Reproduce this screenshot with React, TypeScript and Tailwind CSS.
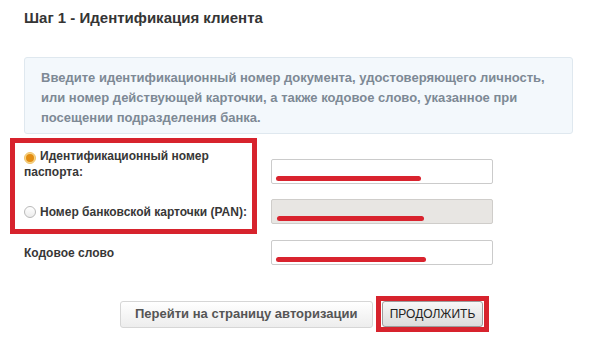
import React from 'react';

const RedScribble = ({ left, width }: { left: number; width: number }) => (
    <span
        className="absolute top-[16px] h-[5px] rounded-full bg-[#d9232e]"
        style={{ left, width }}
    />
);

const Radio = ({ checked }: { checked?: boolean }) =>
    checked ? (
        <span className="inline-flex w-[12px] h-[12px] rounded-full border border-[#f2c46a] bg-[#f7d68c] items-center justify-center mr-[4px] align-[-2px]">
            <span className="w-[8px] h-[8px] rounded-full bg-[#e38d12]" />
        </span>
    ) : (
        <span className="inline-block w-[12px] h-[12px] rounded-full border border-[#b9b9b9] bg-gradient-to-b from-white to-[#ececec] mr-[4px] align-[-2px]" />
    );

const App: React.FC = () => {
    return (
        <div className="w-[600px] h-[355px] overflow-hidden bg-white pl-6 pt-2 font-['Liberation_Sans',Arial,sans-serif]">
            <h1 className="text-[15px] font-bold leading-5 text-[#353535]">Шаг 1 - Идентификация клиента</h1>

            <div className="mt-[29px] w-[549px] rounded-[3px] border border-[#dfe8ef] bg-[#f3f8fc] pl-4 pr-4 pt-[10px] pb-[5px] text-[13px] font-bold leading-5 text-[#7d8995]">
                Введите идентификационный номер документа, удостоверяющего личность,
                <br />
                или номер действующей карточки, а также кодовое слово, указанное при
                <br />
                посещении подразделения банка.
            </div>

            {/* form */}
            <div className="relative mt-[14px] text-[12px] font-bold text-[#373737]">
                {/* annotation frame */}
                <div className="absolute -left-[14px] -top-[10px] w-[247px] h-[96px] border-[5px] border-[#d7232d]" />

                <div className="flex items-start">
                    <div className="w-[247px] pr-6 leading-[16px]">
                        <Radio checked />
                        Идентификационный номер паспорта:
                    </div>
                    <div className="relative mt-[11px] w-[222px] h-[25px] rounded-[2px] border border-[#cbcbcb] bg-white">
                        <RedScribble left={4} width={145} />
                    </div>
                </div>

                <div className="flex items-center mt-[15px]">
                    <div className="w-[247px] leading-[16px]">
                        <Radio />
                        Номер банковской карточки (PAN):
                    </div>
                    <div className="relative w-[222px] h-[25px] rounded-[2px] border border-[#cfcdca] bg-[#e8e6e3]">
                        <RedScribble left={5} width={147} />
                    </div>
                </div>

                <div className="flex items-center mt-[16px]">
                    <div className="w-[247px] leading-[16px]">Кодовое слово</div>
                    <div className="relative w-[222px] h-[25px] rounded-[2px] border border-[#cbcbcb] bg-white">
                        <RedScribble left={4} width={150} />
                    </div>
                </div>

                <div className="flex items-center mt-[31px] ml-[96px]">
                    <button className="h-[27px] w-[253px] whitespace-nowrap rounded-[3px] border border-[#d6d6d6] bg-gradient-to-b from-white to-[#ededed] pl-[14px] pr-[10px] text-left text-[13px] font-bold text-[#555]">
                        Перейти на страницу авторизации
                    </button>
                    <div className="ml-[3px] border-[5px] border-[#d7232d] bg-white px-px">
                        <button className="flex h-[26px] w-[101px] items-center justify-center rounded-[3px] border border-[#9c9c9c] bg-gradient-to-b from-[#f7f7f7] to-[#dcdcdc] text-[12px] font-normal text-[#222]">
                            ПРОДОЛЖИТЬ
                        </button>
                    </div>
                </div>
            </div>
        </div>
    );
};

export default App;
